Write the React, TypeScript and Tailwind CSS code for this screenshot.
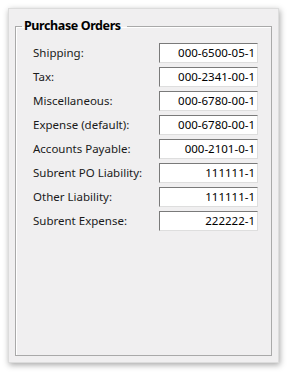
const rows: [string, string][] = [
  ["Shipping:", "000-6500-05-1"],
  ["Tax:", "000-2341-00-1"],
  ["Miscellaneous:", "000-6780-00-1"],
  ["Expense (default):", "000-6780-00-1"],
  ["Accounts Payable:", "000-2101-0-1"],
  ["Subrent PO Liability:", "111111-1"],
  ["Other Liability:", "111111-1"],
  ["Subrent Expense:", "222222-1"],
];

export default function App() {
  return (
    <div
      className="w-[288px] h-[372px] bg-white pt-[8px] pl-[8px]"
      style={{ fontFamily: '"Noto Sans", "Open Sans", sans-serif' }}
    >
      <div className="w-[271px] h-[355px] bg-[#f0eff0] border border-[#dcdcdc] shadow-[1px_2px_6px_rgba(0,0,0,0.35)] pt-[9px] pl-[6px]">
        <fieldset className="w-[257px] h-[338px] border border-[#a9a9a9] shadow-[inset_1px_1px_0_#ffffff] pt-[9px] px-0 m-0">
          <legend className="ml-[6px] pl-[2px] pr-[6px] text-[12.5px] font-bold leading-[16px] tracking-[-0.4px] text-black">Purchase Orders</legend>
          <div className="flex flex-col gap-[4px] pl-[17px]">
            {rows.map(([label, value]) => (
              <div key={label} className="flex items-center h-[20px]">
                <span className="w-[126px] text-[11.5px] text-[#1a1a1a] leading-none">{label}</span>
                <div className="w-[99px] h-[20px] bg-white border-t border-l border-t-[#7a7a7a] border-l-[#7a7a7a] border-b border-r border-b-[#dedede] border-r-[#dedede] flex items-center justify-end pr-[2px] text-[11.5px] text-black leading-none">
                  {value}
                </div>
              </div>
            ))}
          </div>
        </fieldset>
      </div>
    </div>
  );
}
